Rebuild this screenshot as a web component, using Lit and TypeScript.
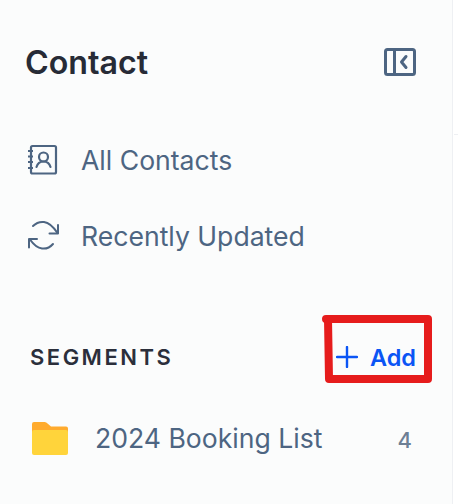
import { LitElement, html, css } from "lit";
import { customElement } from "lit/decorators.js";

@customElement("app-root")
export class AppRoot extends LitElement {
  static styles = css`
    :host { display: block; width: 458px; height: 504px; overflow: hidden; position: relative; background: #fff; font-family: Inter, "Liberation Sans", sans-serif; }
    .side { box-sizing: border-box; width: 453px; height: 504px; background: #fbfcfc; border-right: 1px solid #eef0f3; padding: 41px 0 0 26px; display: flex; flex-direction: column; }
    .rail { position: absolute; left: 454px; top: 134px; width: 4px; height: 1px; background: #eef0f3; }
    .head { display: flex; align-items: center; justify-content: space-between; height: 42px; padding-right: 35px; }
    h1 { margin: 1px 0 0 -1px; font-size: 32.2px; line-height: 42px; font-weight: 600; color: #272b36; }
    svg { display: block; flex: none; }
    .nav { display: flex; flex-direction: column; margin-top: 39px; }
    .item { display: flex; align-items: center; height: 76px; gap: 21px; font-size: 26.6px; color: #4d6582; }
    .seg { display: flex; align-items: center; justify-content: space-between; margin-top: 58px; height: 50px; padding: 0 36px 0 4px; }
    .seg span.t { font-size: 22px; font-weight: 600; letter-spacing: 2.5px; color: #2b2f3b; }
    .add { display: flex; align-items: center; gap: 12px; color: #0b55f5; font-size: 23.5px; font-weight: 600; }
    .row { display: flex; align-items: center; height: 40px; margin-top: 36px; padding: 0 40px 0 6px; font-size: 26.6px; color: #4d6582; }
    .row svg { margin-right: 27px; }
    .row .n { margin-left: auto; font-size: 22px; color: #6d7f95; font-weight: 500; padding-top: 3px; }
    .mark { position: absolute; left: 318px; top: 310px; pointer-events: none; }
  `;
  render() {
    return html`
      <div class="side">
        <div class="head">
          <h1>Contact</h1>
          <svg width="34" height="30" viewBox="0 0 34 30" fill="none" stroke="#4d6582" stroke-width="3">
            <rect x="2.500" y="2.500" width="29" height="25" rx="2"/>
            <path d="M11.500 2.500v25"/>
            <path d="M23 9.500l-4.500 5.500 4.500 5.500" stroke-linecap="round" stroke-linejoin="round"/>
          </svg>
        </div>
        <div class="nav">
          <div class="item">
            <svg width="34" height="34" viewBox="0 0 34 34" fill="none" stroke="#4d6582" stroke-width="2.200">
              <rect x="5" y="3" width="25" height="27.500" rx="1.500"/>
              <path d="M2 8h5M2 13.500h5M2 19h5M2 25h5"/>
              <circle cx="17.500" cy="14" r="4.500"/>
              <path d="M10.500 24c1-3.500 3.500-5.500 7-5.500s6 2 7 5.500" stroke-linecap="round"/>
            </svg>
            <span>All Contacts</span>
          </div>
          <div class="item">
            <svg width="34" height="34" viewBox="0 0 34 34" fill="none" stroke="#4d6582" stroke-width="2" stroke-linecap="round" stroke-linejoin="round">
              <path d="M7 7c3-3 7-4.500 11-4 5 .6 9.500 5 13.500 11"/>
              <path d="M32 6v8.500h-8.500"/>
              <path d="M27 25c-3 3.500-7 5-11 4.500-5-.6-8.500-4-12-9"/>
              <path d="M3 28.500V20h8"/>
            </svg>
            <span>Recently Updated</span>
          </div>
        </div>
        <div class="seg">
          <span class="t">SEGMENTS</span>
          <div class="add">
            <svg width="22" height="22" viewBox="0 0 22 22" fill="none" stroke="#0b55f5" stroke-width="2.400" stroke-linecap="round"><path d="M11 1v20M1 11h20"/></svg>
            <span>Add</span>
          </div>
        </div>
        <div class="row">
          <svg width="36" height="34" viewBox="0 0 36 34">
            <path d="M0 3a2 2 0 0 1 2-2h10c1.500 0 2.500.5 3.500 1.500L19 5.500h15a2 2 0 0 1 2 2V14H0z" fill="#ffab2e"/>
            <path d="M0 11a2 2 0 0 1 2-2h32a2 2 0 0 1 2 2v21a2 2 0 0 1-2 2H2a2 2 0 0 1-2-2z" fill="#ffd43b"/>
          </svg>
          <span>2024 Booking List</span>
          <span class="n">4</span>
        </div>
      </div>
      <div class="rail"></div>
      <svg class="mark" width="120" height="76" viewBox="0 0 120 76" fill="none" stroke="#e61c1c" stroke-width="8" stroke-linecap="round" stroke-linejoin="round">
        <path d="M8 9H110V69H11L10 9"/>
      </svg>
    `;
  }
}
